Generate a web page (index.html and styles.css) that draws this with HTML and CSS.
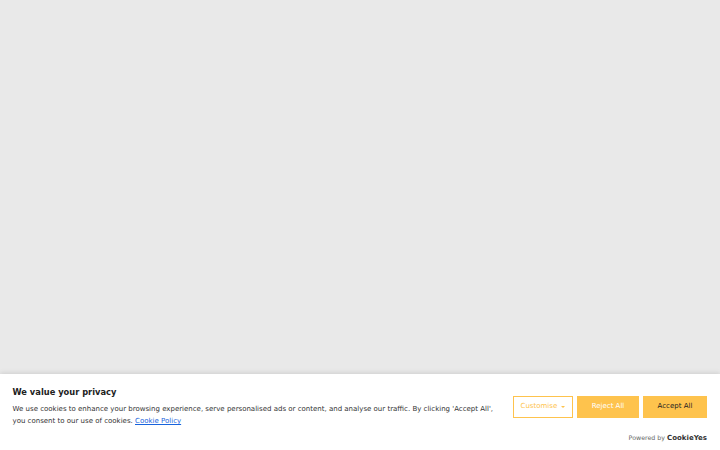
FILE: index.html
```html
<!DOCTYPE html>
<html lang="en">
<head>
    <meta charset="UTF-8">
    <meta name="viewport" content="width=device-width, initial-scale=1.0">
    <title>Cookie consent</title>
    <link rel="stylesheet" href="styles.css">
</head>
<body>
    <main class="page-area"></main>

    <section class="cookie-bar">
        <div class="cookie-left">
            <h2 class="cookie-title">We value your privacy</h2>
            <p class="cookie-text">We use cookies to enhance your browsing experience, serve personalised ads or content, and analyse our traffic. By clicking 'Accept All', you consent to our use of cookies. <a href="#">Cookie Policy</a></p>
        </div>
        <div class="cookie-right">
            <div class="cookie-buttons">
                <button class="btn btn-outline">Customise <span class="caret"></span></button>
                <button class="btn btn-reject">Reject All</button>
                <button class="btn btn-accept">Accept All</button>
            </div>
            <div class="powered">Powered by <span class="brand">CookieYes</span></div>
        </div>
    </section>
</body>
</html>
```

FILE: styles.css
```css
body {
    margin: 0;
    display: flex;
    flex-direction: column;
    height: 450px;
    overflow: hidden;
    background: #e9e9e9;
    font-family: "DejaVu Sans", Verdana, sans-serif;
}

.page-area {
    flex: 1;
}

.cookie-bar {
    height: 76px;
    display: flex;
    justify-content: space-between;
    background: #fff;
    box-shadow: 0 -1px 5px rgba(0, 0, 0, 0.12);
    padding: 0 13px 0 12.5px;
    box-sizing: border-box;
}

.cookie-left {
    width: 486px;
    padding-top: 13px;
}

.cookie-title {
    margin: 0;
    font-size: 8.3px;
    line-height: 11px;
    font-weight: 700;
    color: #212121;
}

.cookie-text {
    margin: 5px 0 0;
    font-size: 7px;
    line-height: 12px;
    color: #333;
}

.cookie-text a {
    color: #1863dc;
}

.cookie-right {
    display: flex;
    flex-direction: column;
    align-items: flex-end;
    padding-top: 22px;
}

.cookie-buttons {
    display: flex;
    gap: 4px;
}

.btn {
    height: 22px;
    padding: 0 0 2px;
    border: 1px solid #fec34d;
    background: #fec34d;
    font-family: inherit;
    font-size: 7px;
    color: #fff;
}

.btn-outline {
    width: 60px;
    background: #fff;
    color: #fec34d;
}

.caret {
    display: inline-block;
    width: 0;
    height: 0;
    margin-left: 2px;
    border-left: 2px solid transparent;
    border-right: 2px solid transparent;
    border-top: 2px solid #fec34d;
    vertical-align: 0;
}

.btn-reject {
    width: 62px;
}

.btn-accept {
    width: 64px;
    color: #212121;
}

.powered {
    margin-top: 16px;
    display: flex;
    align-items: baseline;
    gap: 2px;
    font-size: 6.3px;
    color: #666;
}

.brand {
    font-size: 7px;
    font-weight: 700;
    color: #333;
}
```
